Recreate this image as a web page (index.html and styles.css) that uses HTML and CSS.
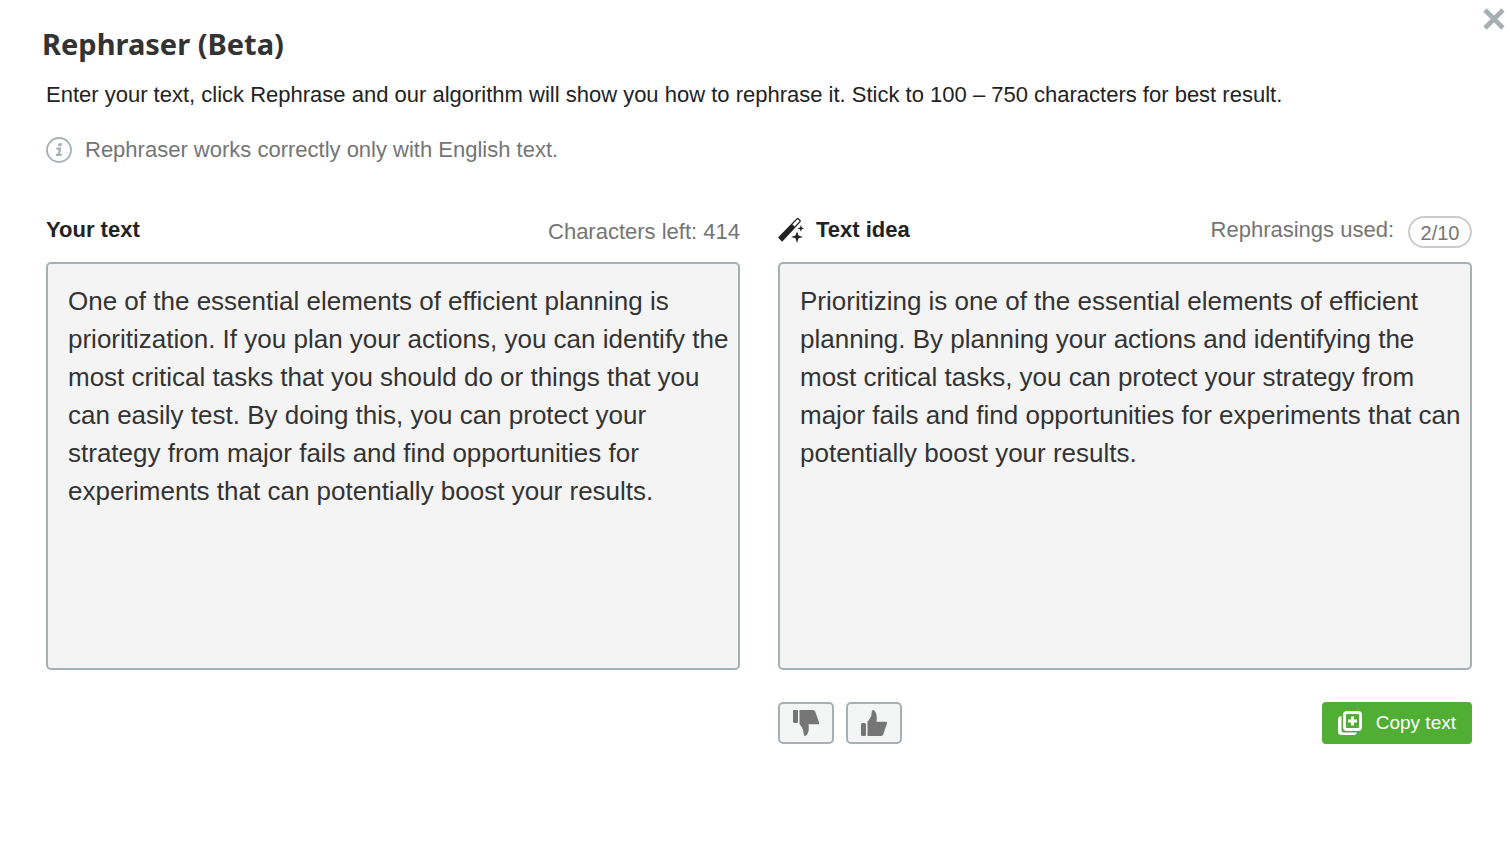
FILE: index.html
```html
<!DOCTYPE html>
<html lang="en">
<head>
<meta charset="utf-8">
<title>Rephraser (Beta)</title>
<link rel="stylesheet" href="styles.css">
</head>
<body>
<main class="dialog">
  <button class="close" type="button" aria-label="Close">
    <svg width="24" height="24" viewBox="0 0 24 24"><path d="M3 3 21 21M21 3 3 21" stroke="#a6b0b3" stroke-width="4.6" fill="none"/></svg>
  </button>
  <h1 class="title">Rephraser (Beta)</h1>
  <p class="intro">Enter your text, click Rephrase and our algorithm will show you how to rephrase it. Stick to 100 – 750 characters for best result.</p>
  <p class="note">
    <svg width="26" height="26" viewBox="0 0 26 26" aria-hidden="true"><circle cx="13" cy="13" r="12" fill="none" stroke="#a6b0b3" stroke-width="1.8"/><path d="M12.6 6.3h3.4l-.5 3h-3.4z" fill="#a6b0b3"/><path d="M10.400 11.700h3.600l-1.300 6.200h3M10 17.900h3" fill="none" stroke="#a6b0b3" stroke-width="2.2"/></svg>
    <span>Rephraser works correctly only with English text.</span>
  </p>
  <div class="columns">
    <section class="column">
      <div class="column-head">
        <label class="label" for="source">Your text</label>
        <span class="meta meta-low">Characters left: 414</span>
      </div>
      <textarea class="box" id="source" spellcheck="false">One of the essential elements of efficient planning is prioritization. If you plan your actions, you can identify the most critical tasks that you should do or things that you can easily test. By doing this, you can protect your strategy from major fails and find opportunities for experiments that can potentially boost your results.</textarea>
    </section>
    <section class="column">
      <div class="column-head">
        <label class="label" for="idea">
          <svg width="26" height="26" viewBox="0 0 26 26" aria-hidden="true"><path d="M0 20.6 18.7 1.2Q19.6.2 20.6 1.2L22.5 3.1Q23.4 4.1 22.5 5L4.2 24.8z" fill="#222"/><path d="m14.400 7.400 4.800-4.900q.5-.4.9 0l1.200 1.200q.4.5 0 .9l-4.700 5z" fill="#fff"/><path d="m19 14.500 1.500 4 4.500 1.400-4.500 1.400-1.500 4.700-1.500-4.700-4.500-1.400 4.500-1.400zM22.900 8l.9 2.500 2.200.9-2.200.8-.9 2.600-.9-2.600-2.500-.8 2.500-.9z" fill="#222"/></svg>
          <span>Text idea</span>
        </label>
        <span class="meta">Rephrasings used:</span>
        <span class="badge">2/10</span>
      </div>
      <textarea class="box" id="idea" readonly>Prioritizing is one of the essential elements of efficient planning. By planning your actions and identifying the most critical tasks, you can protect your strategy from major fails and find opportunities for experiments that can potentially boost your results.</textarea>
      <div class="actions">
        <button class="vote" type="button" aria-label="Bad idea">
          <svg width="26" height="26" viewBox="0 0 26 26"><path d="M1 0h3q1 0 1 1v10.500q0 1.500-1.500 1.500h-2Q0 13 0 11.500V1q0-1 1-1zM6.500 0H20q1.600 0 2.200 1.600L26 12.500q.3 1.800-1.500 1.800H15.500q.8 5-.5 8.500Q13.900 26 12 26q-1.200 0-1.200-1.600 0-4.500-2-7.200Q7.800 15.500 6.500 14.200z" fill="#757575"/></svg>
        </button>
        <button class="vote" type="button" aria-label="Good idea">
          <svg width="26" height="26" viewBox="0 0 26 26"><path transform="matrix(1 0 0 -1 0 26)" d="M1 0h3q1 0 1 1v10.500q0 1.500-1.500 1.500h-2Q0 13 0 11.500V1q0-1 1-1zM6.500 0H20q1.600 0 2.200 1.600L26 12.500q.3 1.800-1.500 1.800H15.500q.8 5-.5 8.500Q13.900 26 12 26q-1.200 0-1.200-1.600 0-4.500-2-7.200Q7.800 15.500 6.500 14.200z" fill="#757575"/></svg>
        </button>
        <button class="copy" type="button">
          <svg width="24" height="24" viewBox="0 0 24 24" aria-hidden="true"><rect x="6.500" y="1.500" width="16" height="17" rx="2.500" fill="none" stroke="#fff" stroke-width="3"/><path d="M14.500 5.500v9M10 10h9" stroke="#fff" stroke-width="3"/><path d="M3.500 5Q0 5 0 8.500V20.500Q0 24 3.500 24H15.500Q18.500 24 18.800 21.500H5.500Q3.500 21.500 3.500 19.500z" fill="#fff"/></svg>
          <span>Copy text</span>
        </button>
      </div>
    </section>
  </div>
</main>
</body>
</html>
```
FILE: styles.css
```css
* { box-sizing: border-box; }

body {
  margin: 0;
  background: #fff;
  color: #222;
  font-family: "Liberation Sans", Arial, sans-serif;
}

.dialog {
  position: relative;
  padding: 24px 38px 98px 46px;
}

.close {
  position: absolute;
  top: 7px;
  right: 4px;
  display: flex;
  padding: 0;
  border: 0;
  background: none;
}

.title {
  margin: 0 0 0 -4px;
  color: #333;
  font: bold 29px/40px "Noto Sans", sans-serif;
}

.intro {
  margin: 17px 0 0;
  font-size: 22px;
  line-height: 28px;
}

.note {
  display: flex;
  align-items: center;
  gap: 13px;
  margin: 27px 0 0;
  color: #757575;
  font-size: 22px;
  line-height: 28px;
}

.columns {
  display: grid;
  grid-template-columns: 1fr 1fr;
  gap: 38px;
  margin-top: 52px;
}

.column-head {
  display: flex;
  align-items: flex-start;
  height: 32px;
  margin-bottom: 14px;
}

.label {
  display: flex;
  align-items: center;
  gap: 12px;
  margin-right: auto;
  font-size: 22px;
  font-weight: bold;
  line-height: 28px;
}

.meta {
  color: #757575;
  font-size: 22px;
  line-height: 28px;
}

.meta-low { padding-top: 2px; }

.badge {
  min-width: 64px;
  height: 32px;
  margin-left: 14px;
  border: 2px solid #ccc;
  border-radius: 16px;
  color: #757575;
  font-size: 20px;
  line-height: 30px;
  text-align: center;
}

.box {
  display: block;
  width: 100%;
  height: 408px;
  padding: 18px 4px 18px 20px;
  border: 2px solid #a6b0b3;
  border-radius: 5px;
  outline: 0;
  background: #f4f4f4;
  color: #333;
  font: 26px/38px "Liberation Sans", Arial, sans-serif;
  resize: none;
}

.actions {
  display: flex;
  gap: 12px;
  margin-top: 32px;
}

.vote {
  display: flex;
  align-items: center;
  justify-content: center;
  width: 56px;
  height: 42px;
  padding: 0;
  border: 2px solid #a6b0b3;
  border-radius: 5px;
  background: #f4f6f6;
}

.copy {
  display: flex;
  align-items: center;
  gap: 14px;
  height: 42px;
  margin-left: auto;
  padding: 0 16px;
  border: 0;
  border-radius: 4px;
  background: #4fae33;
  color: #fff;
  font: 19px/24px "Liberation Sans", Arial, sans-serif;
}
```
